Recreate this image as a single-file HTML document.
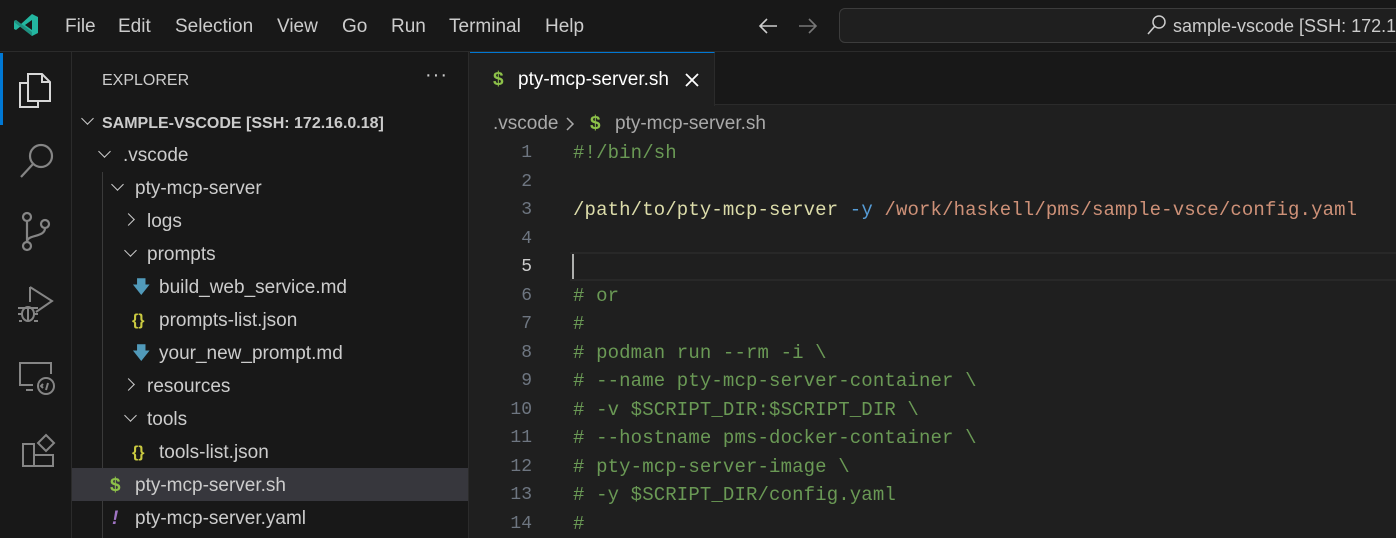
<!DOCTYPE html>
<html><head><meta charset="utf-8"><style>
*{margin:0;padding:0;box-sizing:border-box}
body{width:1396px;height:538px;overflow:hidden;background:#1f1f1f;font-family:"Liberation Sans",sans-serif;color:#ccc;position:relative}
.abs{position:absolute}
#title{left:0;top:0;width:1396px;height:52px;background:#181818;border-bottom:1px solid #2b2b2b}
.menu{top:16px;font-size:19px;color:#ccc}
#act{left:0;top:52px;width:72px;height:486px;background:#181818;border-right:1px solid #2b2b2b}
#side{left:72px;top:52px;width:397px;height:486px;background:#181818;border-right:1px solid #2b2b2b}
.row{position:absolute;left:0;width:396px;height:33px;font-size:19px;line-height:35px;color:#ccc;white-space:nowrap}
.chev{position:absolute;top:11px;width:9px;height:9px;border-right:1.6px solid #ccc;border-bottom:1.6px solid #ccc}
.down{transform:rotate(45deg)}
.right{transform:rotate(-45deg)}
#tabs{left:470px;top:52px;width:926px;height:53px;background:#181818;border-bottom:1px solid #2b2b2b}
#tab{left:470px;top:52px;width:245px;height:54px;background:#1f1f1f;border-top:1px solid #0078d4;border-right:1px solid #2b2b2b}
.code{position:absolute;font-family:"Liberation Mono",monospace;font-size:19px;letter-spacing:0.13px;white-space:pre;line-height:28.5px}
.ln{position:absolute;left:470px;width:62px;text-align:right;font-family:"Liberation Mono",monospace;font-size:18px;color:#6e7681;line-height:28.5px}
.c{color:#6a9955}.s{color:#dcdcaa}.b{color:#569cd6}.o{color:#ce9178}
</style></head><body>
<div id="title" class="abs"></div>
<svg class="abs" style="left:13px;top:12px" width="26" height="26" viewBox="0 0 26 26"><path d="M19 2 L25 5 V21 L19 24 L8 14 L3 18 L1 17 V9 L3 8 L8 12 Z M19 8 L12 13 L19 18 Z" fill="#23b6a0"/><path d="M1 9 L3 8 L19 20 L19 24 L1 10Z" fill="#1e8f7f"/></svg>
<div class="abs menu" style="left:65px">File</div>
<div class="abs menu" style="left:118px">Edit</div>
<div class="abs menu" style="left:175px">Selection</div>
<div class="abs menu" style="left:277px">View</div>
<div class="abs menu" style="left:342px">Go</div>
<div class="abs menu" style="left:391px">Run</div>
<div class="abs menu" style="left:449px">Terminal</div>
<div class="abs menu" style="left:545px">Help</div>
<svg class="abs" style="left:757px;top:17px" width="22" height="18" viewBox="0 0 22 18" fill="none" stroke="#ccc" stroke-width="1.6"><path d="M20 9 H3 M10 2 L3 9 L10 16"/></svg>
<svg class="abs" style="left:797px;top:17px" width="22" height="18" viewBox="0 0 22 18" fill="none" stroke="#777" stroke-width="1.6"><path d="M2 9 H19 M12 2 L19 9 L12 16"/></svg>
<div class="abs" style="left:839px;top:8px;width:580px;height:35px;border:1px solid #3c3c3c;border-radius:6px;background:#1f1f1f"></div>
<svg class="abs" style="left:1146px;top:14px" width="22" height="22" viewBox="0 0 22 22"><circle cx="13" cy="8" r="6" fill="none" stroke="#ccc" stroke-width="1.5"/><path d="M9 12 L2 20" stroke="#ccc" stroke-width="1.6"/></svg>
<div class="abs" style="left:1173px;top:16px;font-size:18px;color:#ccc;white-space:nowrap">sample-vscode [SSH: 172.16</div>

<div id="act" class="abs"></div>
<div class="abs" style="left:0;top:53px;width:3px;height:72px;background:#0078d4"></div>
<svg class="abs" style="left:16px;top:69px" width="40" height="40" viewBox="0 0 40 40" fill="none" stroke="#d7d7d7" stroke-width="2"><path d="M12 5 H26 L34 13 V32 H12 Z"/><path d="M26 5 V13 H34"/><path d="M12 14 H4 V38 H22 V32"/></svg>
<svg class="abs" style="left:18px;top:140px" width="40" height="40" viewBox="0 0 40 40" fill="none" stroke="#858585" stroke-width="2.2"><circle cx="23" cy="16" r="11"/><path d="M15 24 L3 37"/></svg>
<svg class="abs" style="left:18px;top:210px" width="36" height="44" viewBox="0 0 36 44" fill="none" stroke="#858585" stroke-width="2.2"><circle cx="9" cy="7" r="4"/><circle cx="9" cy="36" r="4"/><circle cx="27" cy="14" r="4"/><path d="M9 11 V32 M27 18 C27 28 9 24 9 32"/></svg>
<svg class="abs" style="left:16px;top:284px" width="40" height="42" viewBox="0 0 40 42" fill="none" stroke="#858585" stroke-width="2"><path d="M14 3 L36 17 L20 28"/><path d="M14 3 V18"/><ellipse cx="12" cy="30" rx="6" ry="7"/><path d="M2 24 H22 M2 30 H6 M18 30 H22 M3 37 H6 M18 37 H22 M12 23 V37"/></svg>
<svg class="abs" style="left:17px;top:360px" width="40" height="36" viewBox="0 0 40 36" fill="none" stroke="#858585" stroke-width="2"><path d="M16 25 H3 V3 H34 V14"/><path d="M9 30 H16"/><circle cx="29" cy="26" r="8"/><path d="M26 24 L24 26 L26 28 M31 23 L29 30"/></svg>
<svg class="abs" style="left:20px;top:433px" width="36" height="36" viewBox="0 0 36 36" fill="none" stroke="#858585" stroke-width="2"><path d="M3 11 H14 V33 H3 Z M14 22 H33 V33 H14"/><path d="M26 2 L34 10 L26 18 L18 10 Z"/></svg>

<div id="side" class="abs">
<div class="abs" style="left:30px;top:20px;font-size:16px;color:#ccc">EXPLORER</div>
<div class="abs" style="left:353px;top:12px;font-size:20px;color:#ccc;letter-spacing:1px">···</div>
<div class="abs" style="left:30px;top:120px;width:1px;height:366px;background:#3a3a3a"></div>
<div class="row" style="top:53px"><span class="chev down" style="left:11px;top:9px"></span><b style="position:absolute;left:30px;font-size:16px;top:1px">SAMPLE-VSCODE [SSH: 172.16.0.18]</b></div>
<div class="row" style="top:86px"><span class="chev down" style="left:28px;top:9px"></span><span style="position:absolute;left:51px">.vscode</span></div>
<div class="row" style="top:119px"><span class="chev down" style="left:41px;top:9px"></span><span style="position:absolute;left:63px">pty-mcp-server</span></div>
<div class="row" style="top:152px"><span class="chev right" style="left:52px"></span><span style="position:absolute;left:75px">logs</span></div>
<div class="row" style="top:185px"><span class="chev down" style="left:54px;top:9px"></span><span style="position:absolute;left:75px">prompts</span></div>
<div class="row" style="top:218px"><span style="position:absolute;left:60px;color:#519aba;font-size:18px">🡇</span><span style="position:absolute;left:87px">build_web_service.md</span></div>
<div class="row" style="top:251px"><span style="position:absolute;left:60px;color:#cbcb41;font-size:16px;font-weight:bold">{}</span><span style="position:absolute;left:87px">prompts-list.json</span></div>
<div class="row" style="top:284px"><span style="position:absolute;left:60px;color:#519aba;font-size:18px">🡇</span><span style="position:absolute;left:87px">your_new_prompt.md</span></div>
<div class="row" style="top:317px"><span class="chev right" style="left:52px"></span><span style="position:absolute;left:75px">resources</span></div>
<div class="row" style="top:350px"><span class="chev down" style="left:54px;top:9px"></span><span style="position:absolute;left:75px">tools</span></div>
<div class="row" style="top:383px"><span style="position:absolute;left:60px;color:#cbcb41;font-size:16px;font-weight:bold">{}</span><span style="position:absolute;left:87px">tools-list.json</span></div>
<div class="row" style="top:416px;background:#37373d"><span style="position:absolute;left:38px;color:#8dc149;font-weight:bold">$</span><span style="position:absolute;left:63px">pty-mcp-server.sh</span></div>
<div class="row" style="top:449px"><span style="position:absolute;left:40px;color:#a074c4;font-weight:bold;font-style:italic">!</span><span style="position:absolute;left:63px">pty-mcp-server.yaml</span></div>
</div>

<div id="tabs" class="abs"></div>
<div id="tab" class="abs">
<span class="abs" style="left:23px;top:16px;color:#8dc149;font-weight:bold;font-size:19px">$</span>
<span class="abs" style="left:48px;top:16px;font-size:19px;color:#fff">pty-mcp-server.sh</span>
<svg class="abs" style="left:214px;top:19px" width="16" height="16" viewBox="0 0 16 16" stroke="#fff" stroke-width="1.8"><path d="M2 2 L14 14 M14 2 L2 14"/></svg>
</div>
<div class="abs" style="left:493px;top:113px;font-size:19px;color:#a9a9a9;white-space:nowrap">.vscode</div>
<svg class="abs" style="left:565px;top:116px" width="10" height="16" viewBox="0 0 10 16" fill="none" stroke="#a9a9a9" stroke-width="1.5"><path d="M2 2 L8 8 L2 14"/></svg>
<div class="abs" style="left:590px;top:113px;font-size:19px;color:#8dc149;font-weight:bold">$</div>
<div class="abs" style="left:615px;top:113px;font-size:19px;color:#a9a9a9;white-space:nowrap">pty-mcp-server.sh</div>

<div class="abs" style="left:570px;top:252px;width:826px;height:29px;border-top:2px solid #282828;border-bottom:2px solid #282828"></div>
<div class="abs" style="left:572px;top:254px;width:2px;height:25px;background:#aeafad"></div>
<div class="ln" style="top:139px">1<br>2<br>3<br>4<br><span style="color:#ccc">5</span><br>6<br>7<br>8<br>9<br>10<br>11<br>12<br>13<br>14</div>
<div class="code" style="left:573px;top:139px"><span class="c">#!/bin/sh</span>

<span class="s">/path/to/pty-mcp-server</span> <span class="b">-y</span> <span class="o">/work/haskell/pms/sample-vsce/config.yaml</span>


<span class="c"># or</span>
<span class="c">#</span>
<span class="c"># podman run --rm -i \</span>
<span class="c"># --name pty-mcp-server-container \</span>
<span class="c"># -v $SCRIPT_DIR:$SCRIPT_DIR \</span>
<span class="c"># --hostname pms-docker-container \</span>
<span class="c"># pty-mcp-server-image \</span>
<span class="c"># -y $SCRIPT_DIR/config.yaml</span>
<span class="c">#</span></div>
</body></html>
